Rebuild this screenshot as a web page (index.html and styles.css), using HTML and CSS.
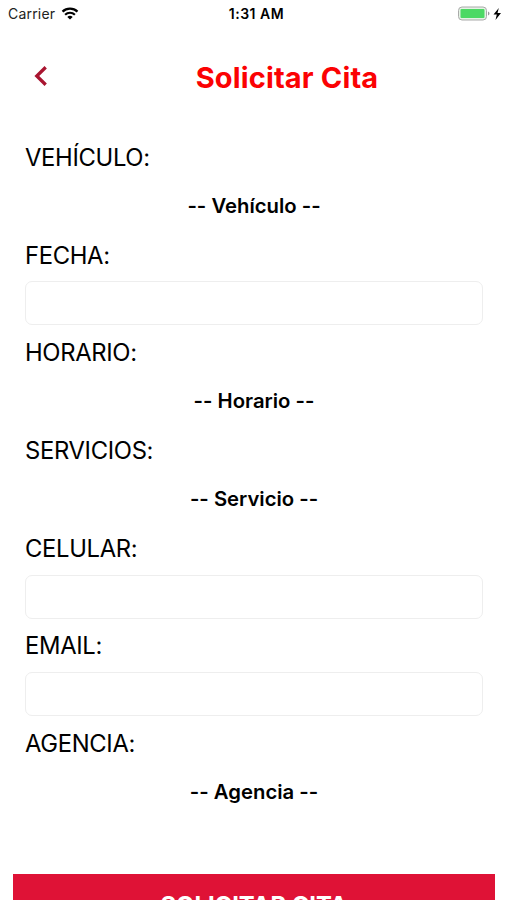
FILE: index.html
```html
<!DOCTYPE html>
<html lang="es">
<head>
<meta charset="utf-8">
<meta name="viewport" content="width=device-width, initial-scale=1">
<title>Solicitar Cita</title>
<link rel="stylesheet" href="styles.css">
</head>
<body>
<div class="screen">
  <div class="status">
    <div class="carrier"><span class="carrier-name">Carrier</span>
      <svg class="wifi" width="18" height="14" viewBox="0 0 18 14"><path d="M1.500 4.600C5.700 .6 12.300 .6 16.500 4.600M4.100 7.700c2.800-2.600 7-2.600 9.800 0" fill="none" stroke="#000" stroke-width="2.200"/><path d="M6.300 9.900c1.600-1.400 3.800-1.400 5.400 0L9 12.500z"/></svg>
    </div>
    <span class="time">1:31 AM</span>
    <div class="power">
      <svg width="46" height="16" viewBox="0 0 46 16"><rect x="1.500" y="1" width="28" height="13" rx="3.500" fill="#e4f2e4" stroke="#aaa"/><rect x="3.500" y="3" width="24" height="9" rx="1" fill="#4cd964"/><path d="M31 5.500c2 .8 2 3.200 0 4z" fill="#999"/><path d="M41.800 2 36.500 8.600h3.300l-1.300 5.400L44 6.900h-3.500z"/></svg>
    </div>
  </div>
  <header class="header">
    <svg class="back" width="14" height="22" viewBox="0 0 14 22"><path d="M12.700 1.300 3.800 10l8.900 8.700" fill="none" stroke="#a91530" stroke-width="3.300"/></svg>
    <h1 class="title">Solicitar Cita</h1>
  </header>
  <form class="form">
    <label class="label">VEHÍCULO:</label>
    <div class="picker">-- Vehículo --</div>
    <label class="label" for="fecha">FECHA:</label>
    <input class="field" id="fecha" type="text">
    <label class="label">HORARIO:</label>
    <div class="picker">-- Horario --</div>
    <label class="label">SERVICIOS:</label>
    <div class="picker">-- Servicio --</div>
    <label class="label" for="celular">CELULAR:</label>
    <input class="field" id="celular" type="text">
    <label class="label" for="email">EMAIL:</label>
    <input class="field" id="email" type="text">
    <label class="label">AGENCIA:</label>
    <div class="picker">-- Agencia --</div>
  </form>
  <button class="submit" type="button">SOLICITAR CITA</button>
</div>
</body>
</html>
```
FILE: styles.css
```css
* { box-sizing: border-box; }
body { margin: 0; background: #fff; color: #000; font-family: Inter, "Liberation Sans", sans-serif; font-feature-settings: "calt" 0; }
.screen { height: 900px; overflow: hidden; display: flex; flex-direction: column; }
.status { height: 27px; flex: none; display: grid; grid-template-columns: 1fr auto 1fr; align-items: center; padding: 0 4px 0 8px; font-size: 14px; }
.carrier { display: flex; align-items: center; gap: 6px; }
.carrier-name { color: #222; letter-spacing: .2px; }
.time { font-weight: 600; font-size: 14px; letter-spacing: .5px; padding-left: 2px; }
.power { display: flex; justify-content: flex-end; }
.header { height: 99px; flex: none; display: grid; grid-template-columns: 66px 1fr; align-items: center; padding-left: 33px; }
.title { margin: 0; padding: 1px 32px 0 0; font-size: 29px; font-weight: 700; letter-spacing: .15px; color: #fb0203; text-align: center; }
.form { flex: none; display: grid; grid-auto-rows: 48.85px; align-items: center; padding: 7px 25px 0; }
.label { font-size: 23.8px; letter-spacing: -.33px; }
.picker { padding-bottom: 1.4px; font-size: 20.3px; font-weight: 630; text-align: center; }
.field { width: 458px; height: 44px; margin-top: -1px; border: 1px solid #eee; border-radius: 7px; background: #fff; }
.submit { flex: none; height: 58px; margin: 57.6px 12px 0 13px; padding: 4px 0 0; border: 0; background: #df1236; color: #fff; font: 700 23.8px Inter, sans-serif; }
```
